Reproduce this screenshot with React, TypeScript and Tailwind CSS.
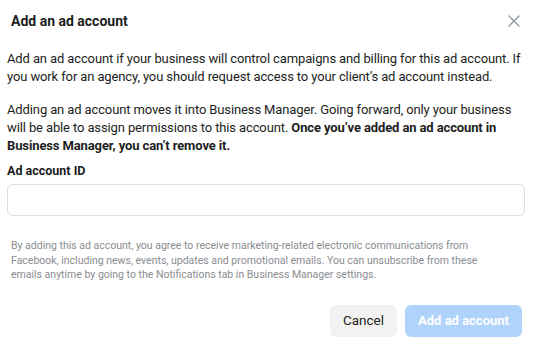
import React from 'react'

// Close glyph drawn as two thin strokes
const CloseIcon: React.FC = () => (
  <svg width="12" height="12" viewBox="0 0 12 12" fill="none">
    <path d="M1 1L11 11M11 1L1 11" stroke="#8d949e" strokeWidth="1.3" strokeLinecap="round" />
  </svg>
)

export default function App() {
  return (
    <div
      className="w-[534px] h-[347px] bg-white text-[#1c1e21] overflow-hidden"
      style={{ fontFamily: 'Roboto, "Liberation Sans", sans-serif' }}
    >
      {/* Header */}
      <div className="flex items-center justify-between pl-[11px] pr-[14px] pt-[6px] h-[35px]">
        <h1 className="text-[14px] font-bold leading-[18px]">Add an ad account</h1>
        <button className="p-0">
          <CloseIcon />
        </button>
      </div>

      {/* Body */}
      <div className="pl-[7px] pr-[6px] pt-[15px]">
        <p className="text-[13px] leading-[18px] tracking-[-0.12px]">
          Add an ad account if your business will control campaigns and billing for this ad account. If
          you work for an agency, you should request access to your client’s ad account instead.
        </p>
        <p className="mt-[15px] text-[13px] leading-[18px] tracking-[-0.12px] pr-[4px]">
          Adding an ad account moves it into Business Manager. Going forward, only your business
          will be able to assign permissions to this account.{' '}
          <span className="font-bold">Once you’ve added an ad account in Business Manager, you can’t remove it.</span>
        </p>

        <label className="block mt-[8px] text-[12.5px] font-bold leading-[16px]">Ad account ID</label>
        <input
          type="text"
          className="mt-[5px] block w-[518px] h-[32px] rounded-[6px] border border-[#dadde1] bg-white px-2 outline-none"
        />
      </div>

      {/* Disclaimer */}
      <p className="pl-[11px] pr-[50px] mt-[23px] text-[10.5px] leading-[14.5px] text-[#8a8d91]">
        By adding this ad account, you agree to receive marketing-related electronic communications from
        Facebook, including news, events, updates and promotional emails. You can unsubscribe from these
        emails anytime by going to the Notifications tab in Business Manager settings.
      </p>

      {/* Footer */}
      <div className="flex justify-end gap-2 pr-[12px] mt-[22px]">
        <button className="h-[32px] w-[67px] rounded-[6px] bg-[#f2f2f2] text-[13.5px] text-[#1c1e21]">
          Cancel
        </button>
        <button className="h-[32px] w-[117px] rounded-[6px] bg-[#b0d3fb] text-[13px] font-bold text-white">
          Add ad account
        </button>
      </div>
    </div>
  )
}
